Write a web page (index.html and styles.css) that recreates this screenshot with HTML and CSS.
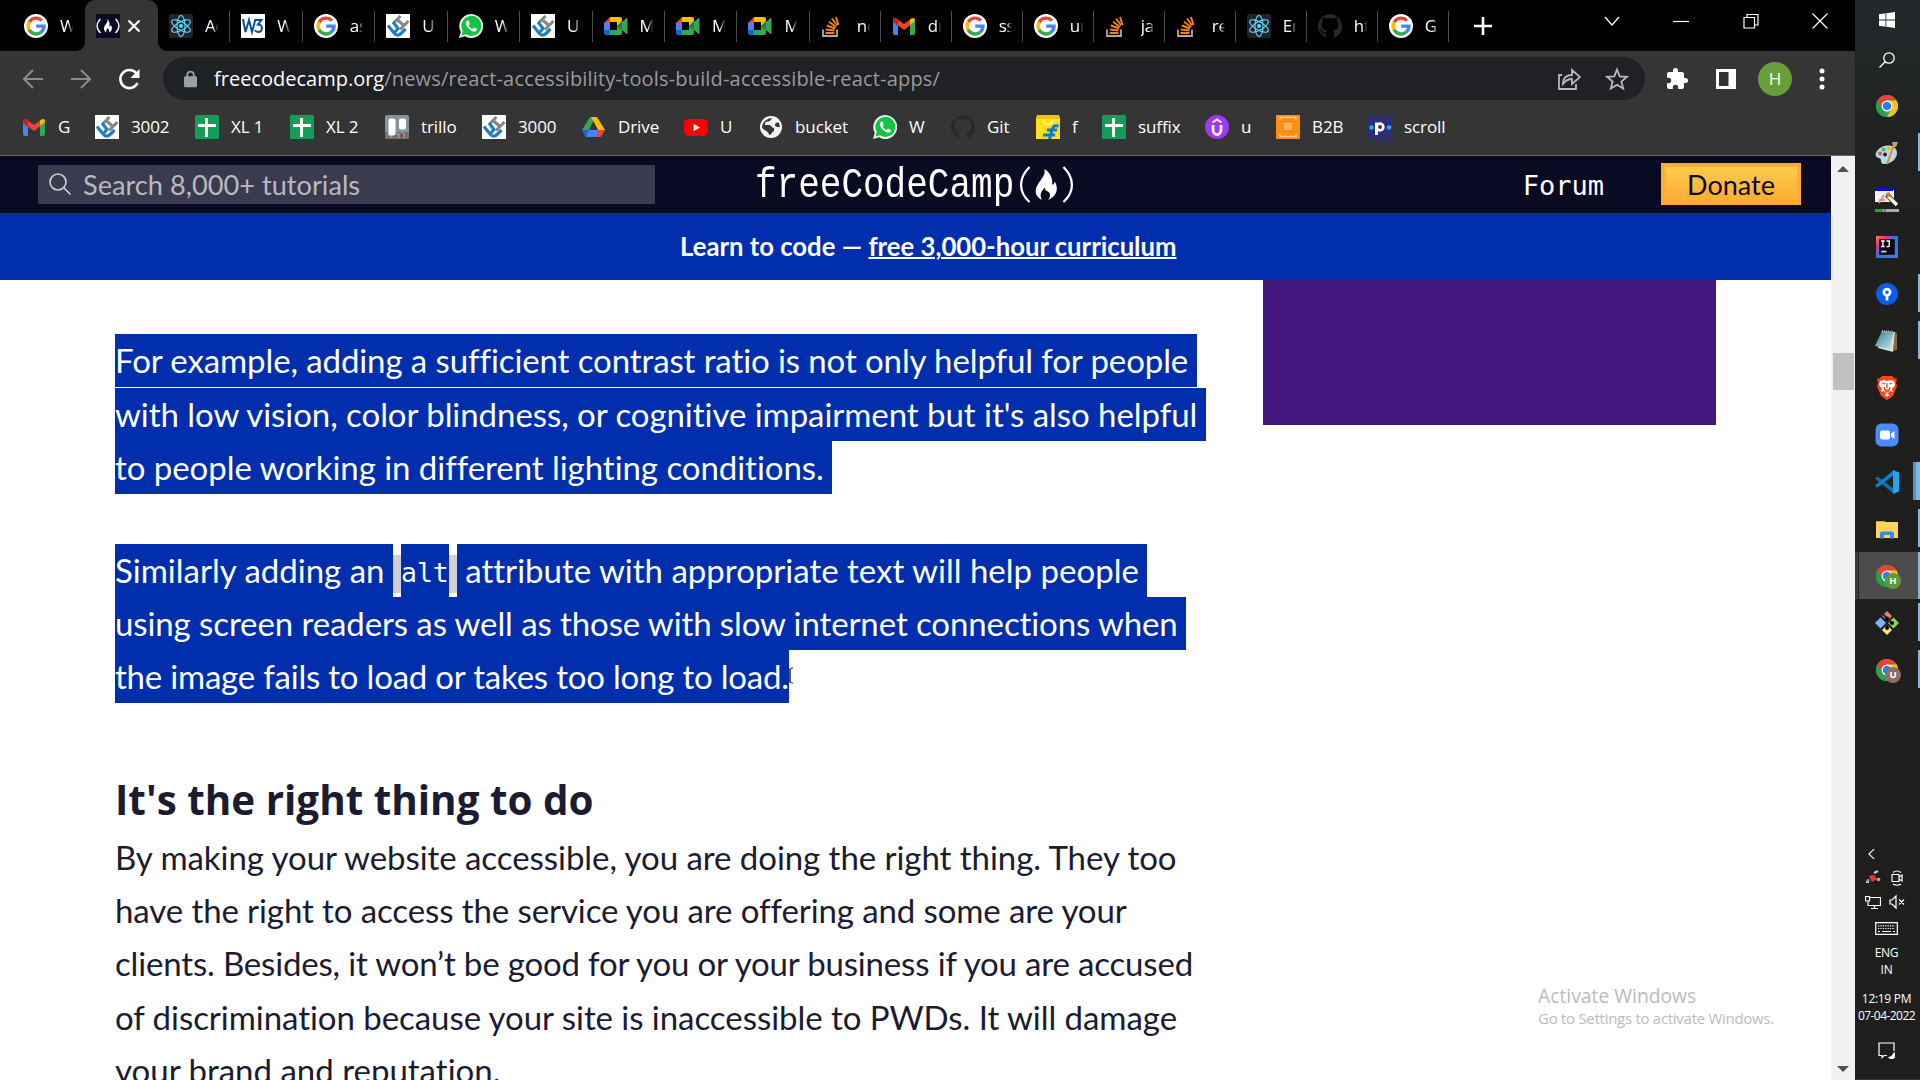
FILE: index.html
```html
<!DOCTYPE html>
<html lang="en">
<head>
<meta charset="utf-8">
<title>React Accessibility Tools</title>
<link rel="stylesheet" href="styles.css">
</head>
<body>
<svg class="sprite" aria-hidden="true">
  <linearGradient id="ij" x1="0" y1="0" x2="1" y2="1"><stop offset="0" stop-color="#ff8a1e"/><stop offset=".25" stop-color="#e8318c"/><stop offset=".5" stop-color="#1d7df2"/><stop offset="1" stop-color="#5a6cf5"/></linearGradient>
  <linearGradient id="np" x1="0" y1="0" x2="1" y2="1"><stop offset="0" stop-color="#2f7f8c"/><stop offset="1" stop-color="#c6e9ee"/></linearGradient>
  <symbol id="google" viewBox="0 0 24 24"><circle cx="12" cy="12" r="12" fill="#fff"/><g fill="none" stroke-width="3.4"><path d="M5.2 8.1A8 8 0 0 1 17.9 6.6" stroke="#ea4335"/><path d="M5.1 15.8a8 8 0 0 1 .1-7.7" stroke="#fbbc05"/><path d="M17.3 18A8 8 0 0 1 5.1 15.8" stroke="#34a853"/><path d="M12.2 12.1h7.8A8 8 0 0 1 17.2 18" stroke="#4285f4"/></g></symbol>
  <symbol id="fcc" viewBox="0 0 24 24"><path d="M0 0h24v24H0z" fill="#0a0a23"/><path d="M4.500 5C0 9 0 15 4.500 19M19.500 5c4.500 4 4.500 10 0 14" fill="none" stroke="#fff" stroke-width="1.400"/><path d="M11.500 5c1 4-4 6-3.500 10 .2 2 1.500 3 2.500 3.500-.8-2 .1-3 1.300-4.500.2 1.200 1.800 1.500 1.400 4.500 3-1.500 3.500-5 1.600-7.500-.2 1-.7 1.500-1.300 1.500.4-3-.3-6-2-7.500z" fill="#fff"/></symbol>
  <symbol id="react" viewBox="0 0 24 24"><rect width="24" height="24" rx="2" fill="#20232a"/><circle cx="12" cy="12" r="2" fill="#61dafb"/><g fill="none" stroke="#61dafb" stroke-width="1.100" transform="rotate(90 12 12)"><ellipse cx="12" cy="12" rx="10.500" ry="4"/><ellipse cx="12" cy="12" rx="10.500" ry="4" transform="rotate(60 12 12)"/><ellipse cx="12" cy="12" rx="10.500" ry="4" transform="rotate(120 12 12)"/></g></symbol>
  <symbol id="w3" viewBox="0 0 24 24"><path d="M0 0h24v24H0z" fill="#fff"/><path d="M2 5l2.500 13L8 6l3 12L14.500 5M14.500 6h6l-3.500 4.500c5.500 0 5 7.500 0 7.500-1.500 0-2.500-.7-3-2" fill="none" stroke="#0d4f93" stroke-width="2"/></symbol>
  <symbol id="uh" viewBox="0 0 24 24"><path d="M0 0h24v24H0z" fill="#fff"/><path d="M8 8.500 14.500 2M14 15.500 22.500 7M11 5.500l7 6" fill="none" stroke="#858585" stroke-width="3"/><path d="M2 11.500l6 7.500q3.500 4 7 .5l4.500-4.500M7 8l5 6.500-3 3.500" fill="none" stroke="#2280b8" stroke-width="3.200"/></symbol>
  <symbol id="whatsapp" viewBox="0 0 24 24"><path d="M0 24l1.800-6A12 12 0 1 1 6 22.300z" fill="#e8f5e9"/><path d="M2.500 21.500 3.800 17A10 10 0 1 1 7 20.300z" fill="#12c344"/><path d="M8.500 6.500c-2 1-2 3.500-.8 5.500 1.700 3 4.300 5.300 7.300 5.500 1.700 0 3-1 3-2.600l-3-1.500-1.400 1.500c-2-.8-3.200-2-4-3.700l1.100-1.300-1.100-3.300z" fill="#fff"/></symbol>
  <symbol id="meet" viewBox="0 0 24 24"><path d="M0 9l6-6v6z" fill="#ea4335"/><path d="M6 3h10q2 0 2 2v4l-5 4V8H6z" fill="#fbbc04"/><path d="M0 9h6v7H0z" fill="#4285f4"/><path d="M0 16h6v5H2q-2 0-2-2z" fill="#1967d2"/><path d="M6 16h7v-4l5 3v4q0 2-2 2H6z" fill="#34a853"/><path d="M13 12l5-5v10z" fill="#188038"/><path d="M18 8l4.500-4q1-.5 1 .7v15q0 1-1 .4L18 16z" fill="#34a853"/></symbol>
  <symbol id="stack" viewBox="0 0 24 24"><path d="M2 15.500V22h14v-6.500" fill="none" stroke="#aaa" stroke-width="1.800"/><path d="M4.500 19h9M4.700 15.500l8.800 1M5.800 11.500l8.200 3M8 7.800l7 5.200M11 4.500l5.200 7M15 3l2.500 8" stroke="#f48024" stroke-width="1.900"/></symbol>
  <symbol id="gmail" viewBox="0 0 24 24"><path d="M1 7v12q0 2 2 2h3V9z" fill="#4285f4"/><path d="M18 9v12h3q2 0 2-2V7z" fill="#34a853"/><path d="M1 8V6q0-2 2-2 1 0 2 .8L12 10v6z" fill="#ea4335"/><path d="M12 16V10l7-5.200v6z" fill="#ea4335"/><path d="M18 11V5.500l1.300-.9Q23 2.500 23 7z" fill="#fbbc04"/><path d="M1 8V6q0-2 2-2 1 0 3 1.500V12z" fill="#c5221f"/></symbol>
  <symbol id="github" viewBox="0 0 24 24"><path d="M8 23.500v-4c-3 .7-4-1-4.700-2.300-.4-.7-1.600-1.200-1.200-1.500 1.200-.5 2.200.8 2.800 1.600.8 1.100 2 1.200 3.200.7.200-.8.6-1.300 1-1.600C5.500 15.800 3.600 14.300 3.600 10.500c0-1.400.5-2.500 1.300-3.400-.3-.9-.4-2.200.2-3.700 1.300 0 2.600.7 3.500 1.400 2.200-.6 4.600-.6 6.800 0 .9-.7 2.200-1.400 3.500-1.400.6 1.500.5 2.800.2 3.700.8.900 1.300 2 1.300 3.400 0 3.800-1.900 5.300-5.500 5.900.8.700 1.100 1.700 1.100 3.100v4C21 22 24 18 24 12A12 12 0 1 0 8 23.500z" fill="#24292f"/></symbol>
  <symbol id="sheet" viewBox="0 0 24 24"><rect width="24" height="24" rx="1.500" fill="#129d58"/><path d="M11.500 3v19M3 10.500h18" stroke="#fff" stroke-width="2.900"/></symbol>
  <symbol id="trello" viewBox="0 0 24 24"><rect width="24" height="24" rx="2" fill="#8395a3"/><path d="M0 17h24v5q0 2-2 2H2q-2 0-2-2z" fill="#77706e"/><path d="M2 20h4v3M11 19h3v4M17 18h2v5" stroke="#aaa" fill="none"/><rect x="3.500" y="3.500" width="7" height="17" rx="2" fill="#fff"/><rect x="14" y="3.500" width="7" height="11" rx="2" fill="#fff"/><path d="M16 19h2v3h-2z" fill="#a32c46"/></symbol>
  <symbol id="drive" viewBox="0 0 24 24"><path d="M8 2h5l-5 11-4 8L0 15z" fill="#34a853"/><path d="M9 2h6l8 13h-7z" fill="#fbbc04"/><path d="M7 15h10l-2 7H3.500z" fill="#4285f4"/><path d="M16 15h7l-4 7h-4z" fill="#ea4335"/><path d="M7 15l-3.500 7L0 15z" fill="#1967d2"/><path d="M12 8l4 7H8z" fill="#353535"/></symbol>
  <symbol id="youtube" viewBox="0 0 24 24"><rect y="4" width="24" height="17" rx="4.500" fill="#f00"/><path d="M9.500 8.700v7.600l6.500-3.800z" fill="#fff"/></symbol>
  <symbol id="globe" viewBox="0 0 24 24"><circle cx="12" cy="12" r="11" fill="#f1f3f4"/><path d="M14 3.500c-3 .5-2 3-5 3-3 0-3 2-3 3.500h4c3 0 2 3 5 3v3c-2 0-2 4-5 4 0-4-5-4-7-7.500A9.500 9.500 0 0 1 14 3.500zM20 8c-2-1-4 0-4 2s3 2 5 2" fill="#353535"/></symbol>
  <symbol id="flipkart" viewBox="0 0 24 24"><path d="M0 2h24v22H0z" fill="#ffe11b"/><path d="M1 0h22l1 4H0z" fill="#f9bf13"/><path d="M7 4c1 7 9 7 10 0" fill="none" stroke="#fff8b0" stroke-width="1.500"/><path d="M22.500 11c-5-1-6 1-7 6l-2 7M11 15h10M7 20h12" fill="none" stroke="#047bd5" stroke-width="3"/></symbol>
  <symbol id="udemy" viewBox="0 0 24 24"><circle cx="12" cy="12" r="12" fill="#a435f0"/><path d="M8 10v5c0 6 8 6 8 0v-5" fill="none" stroke="#fff" stroke-width="2.800"/><path d="M7.500 7.500 12 4.500l4.500 3" fill="none" stroke="#fff" stroke-width="2"/></symbol>
  <symbol id="b2b" viewBox="0 0 24 24"><path d="M0 0h24v24H0z" fill="#ff8d12"/><path d="M4 5V2.500h16V5M4 19v2.500h16V19" fill="none" stroke="#ffd09a" stroke-width="1.300"/><path d="M8 8h8v7H8z" fill="#ffbd75"/><path d="M9 10h6M9 13h6" stroke="#ff8d12" stroke-dasharray="1.500 1"/></symbol>
  <symbol id="pscroll" viewBox="0 0 24 24"><path d="M0 0h24v24H0z" fill="#2b2e76"/><circle cx="3.500" cy="12.500" r="2.300" fill="#10b8f5"/><circle cx="21" cy="12.500" r="2.300" fill="#10b8f5"/><path d="M8.500 7.500v12.500" stroke="#fff" stroke-width="3"/><circle cx="12" cy="12" r="3.300" fill="none" stroke="#fff" stroke-width="2.800"/></symbol>
  <symbol id="chrome" viewBox="0 0 24 24"><circle cx="12" cy="12" r="12" fill="#34a853"/><path d="M1.600 6A12 12 0 0 1 22.400 6H12L7 15z" fill="#ea4335"/><path d="M12 6h10.400A12 12 0 0 1 12 24l5.200-9z" fill="#fbc116"/><path d="M1.600 6 6.800 15 12 24A12 12 0 0 1 1.600 6z" fill="#2b9e49"/><circle cx="12" cy="12" r="6" fill="#fff"/><circle cx="12" cy="12" r="4.700" fill="#2f7de9"/></symbol>
  <symbol id="search" viewBox="0 0 24 24"><circle cx="10" cy="10" r="8" fill="none" stroke="currentColor" stroke-width="1.600"/><path d="m15.500 15.500 7 7" stroke="currentColor" stroke-width="1.600"/></symbol>
</svg>

<div class="desktop">
<div class="browser">
  <header class="tabstrip">
    <div class="tabs">
      <div class="tab wide"><svg class="fav"><use href="#google"/></svg><span class="tab-title">W</span></div>
      <div class="tab wide active"><svg class="fav"><use href="#fcc"/></svg><svg class="tab-x" viewBox="0 0 14 14"><path d="m1.500 1.500 11 11m0-11-11 11"/></svg></div>
      <div class="tab wide sep"><svg class="fav"><use href="#react"/></svg><span class="tab-title">Ac</span></div>
      <div class="tab wide sep"><svg class="fav"><use href="#w3"/></svg><span class="tab-title">W</span></div>
      <div class="tab wide sep"><svg class="fav"><use href="#google"/></svg><span class="tab-title">as</span></div>
      <div class="tab wide sep"><svg class="fav"><use href="#uh"/></svg><span class="tab-title">U</span></div>
      <div class="tab wide sep"><svg class="fav"><use href="#whatsapp"/></svg><span class="tab-title">W</span></div>
      <div class="tab wide sep"><svg class="fav"><use href="#uh"/></svg><span class="tab-title">U</span></div>
      <div class="tab wide sep"><svg class="fav"><use href="#meet"/></svg><span class="tab-title">M</span></div>
      <div class="tab wide sep"><svg class="fav"><use href="#meet"/></svg><span class="tab-title">M</span></div>
      <div class="tab wide sep"><svg class="fav"><use href="#meet"/></svg><span class="tab-title">M</span></div>
      <div class="tab sep"><svg class="fav"><use href="#stack"/></svg><span class="tab-title">no</span></div>
      <div class="tab sep"><svg class="fav"><use href="#gmail"/></svg><span class="tab-title">dr</span></div>
      <div class="tab sep"><svg class="fav"><use href="#google"/></svg><span class="tab-title">ss</span></div>
      <div class="tab sep"><svg class="fav"><use href="#google"/></svg><span class="tab-title">ur</span></div>
      <div class="tab sep"><svg class="fav"><use href="#stack"/></svg><span class="tab-title">ja</span></div>
      <div class="tab sep"><svg class="fav"><use href="#stack"/></svg><span class="tab-title">re</span></div>
      <div class="tab sep"><svg class="fav"><use href="#react"/></svg><span class="tab-title">Er</span></div>
      <div class="tab sep"><svg class="fav"><use href="#github"/></svg><span class="tab-title">ht</span></div>
      <div class="tab sep"><svg class="fav"><use href="#google"/></svg><span class="tab-title">G</span></div>
    </div>
    <svg class="new-tab" viewBox="0 0 18 18"><path d="M9 0v18M0 9h18"/></svg>
    <div class="window-controls">
      <svg viewBox="0 0 16 16"><path d="m1 4 7 8 7-8"/></svg>
      <svg viewBox="0 0 16 16"><path d="M0 8.500h16"/></svg>
      <svg viewBox="0 0 16 16"><path d="M1 4.500h10.500V15H1zM4 4V1.500h11V12h-3"/></svg>
      <svg viewBox="0 0 16 16"><path d="m.5.500 15 15m0-15-15 15"/></svg>
    </div>
  </header>

  <div class="toolbar">
    <div class="nav-row">
      <div class="nav-buttons">
        <svg class="dim" viewBox="0 0 24 24"><path d="M22 12H3m9-9-9 9 9 9"/></svg>
        <svg class="dim" viewBox="0 0 24 24"><path d="M2 12h19m-9-9 9 9-9 9"/></svg>
        <svg viewBox="0 0 24 24"><path d="M20.500 16a9 9 0 1 1-1-9.500" stroke-width="2.600"/><path d="M22.500 2v9h-9z" fill="#fff" stroke="none"/></svg>
      </div>
      <div class="omnibox">
        <svg class="lock" viewBox="0 0 14 18"><rect y="6" width="14" height="12" rx="1.500" fill="#9aa0a6"/><path d="M3.500 7V4.500a3.500 3.500 0 0 1 7 0V7" fill="none" stroke="#9aa0a6" stroke-width="2"/></svg>
        <span class="url"><b>freecodecamp.org</b>/news/react-accessibility-tools-build-accessible-react-apps/</span>
        <svg class="share" viewBox="0 0 24 24"><path d="M5 8H2v14h17v-5M6 17c0-7 4-9 9-9V3l8 7-8 7v-5c-4 0-6 1-9 5z"/></svg>
        <svg class="star" viewBox="0 0 24 24"><path d="m12 2.500 2.700 6.800 7.300.5-5.600 4.700 1.800 7.100L12 17.700l-6.200 3.900 1.800-7.100L2 9.800l7.300-.5z"/></svg>
      </div>
      <div class="actions">
        <svg viewBox="0 0 24 24"><path d="M20.500 11H19V7q0-2-2-2h-4V3.500a2.500 2.500 0 0 0-5 0V5H4Q2 5 2 7v3.800h1.500a2.700 2.700 0 0 1 0 5.400H2V20q0 2 2 2h3.800v-1.500a2.700 2.700 0 0 1 5.400 0V22H17q2 0 2-2v-4h1.500a2.500 2.500 0 0 0 0-5z" fill="#fff"/></svg>
        <svg viewBox="0 0 24 24"><path d="M3.500 3.500h17v17h-17z" fill="none" stroke="#fff" stroke-width="3"/><path d="M14.500 3h6v18h-6z" fill="#fff"/></svg>
        <span class="avatar">H</span>
        <svg viewBox="0 0 24 24" fill="#fff"><circle cx="12" cy="4" r="2.500"/><circle cx="12" cy="12" r="2.500"/><circle cx="12" cy="20" r="2.500"/></svg>
      </div>
    </div>
    <nav class="bookmarks">
      <a><svg class="fav"><use href="#gmail"/></svg>G</a>
      <a><svg class="fav"><use href="#uh"/></svg>3002</a>
      <a><svg class="fav"><use href="#sheet"/></svg>XL 1</a>
      <a><svg class="fav"><use href="#sheet"/></svg>XL 2</a>
      <a><svg class="fav"><use href="#trello"/></svg>trillo</a>
      <a><svg class="fav"><use href="#uh"/></svg>3000</a>
      <a><svg class="fav"><use href="#drive"/></svg>Drive</a>
      <a><svg class="fav"><use href="#youtube"/></svg>U</a>
      <a><svg class="fav"><use href="#globe"/></svg>bucket</a>
      <a><svg class="fav"><use href="#whatsapp"/></svg>W</a>
      <a><svg class="fav"><use href="#github"/></svg>Git</a>
      <a><svg class="fav"><use href="#flipkart"/></svg>f</a>
      <a><svg class="fav"><use href="#sheet"/></svg>suffix</a>
      <a><svg class="fav"><use href="#udemy"/></svg>u</a>
      <a><svg class="fav"><use href="#b2b"/></svg>B2B</a>
      <a><svg class="fav"><use href="#pscroll"/></svg>scroll</a>
    </nav>
  </div>

  <div class="viewport">
    <div class="page">
      <div class="site-nav">
        <div class="search"><svg><use href="#search"/></svg><span>Search 8,000+ tutorials</span></div>
        <div class="logo"><span class="logo-text">freeCodeCamp</span>
          <svg viewBox="0 0 54 36"><path d="M10 1C-1 12-1 25 10 35M43 1c11 11 11 24 0 34" fill="none" stroke="#fff" stroke-width="2.200"/><path d="M24.500 3c2 8-8 13-8.500 21-.2 5 3 7 6 9-2.500-5-.8-8 3-12 0 4 3 3 4.500 5.500 1.300 2.500 0 4.500-1.500 6.500 8-3.500 11-10.500 6.500-18-.3 2-1 3-2.500 3.200C33 12 29.500 6 24.500 3z" fill="#fff"/></svg>
        </div>
        <div class="site-links"><span class="forum">Forum</span><span class="donate">Donate</span></div>
      </div>
      <div class="banner">Learn to code — <u>free 3,000-hour curriculum</u></div>
      <div class="content">
        <article>
          <p class="selected gapped"><span class="line tight-2">For example, adding a sufficient contrast ratio is not only helpful for people </span><span class="line tight-1">with low vision, color blindness, or cognitive impairment but it's also helpful </span><span class="line tight-1">to people working in different lighting conditions. </span></p>
          <p class="selected"><span class="line tight-0">Similarly adding an <code><span>alt</span></code> attribute with appropriate text will help people </span><span class="line tight-2">using screen readers as well as those with slow internet connections when </span><span class="line tight-4">the image fails to load or takes too long to load.<svg class="cursor" viewBox="0 0 8 17"><path d="M1 1q3 0 3 2v11q0 2-3 2M7 1Q4 1 4 3v11q0 2 3 2"/></svg></span></p>
          <h2>It's the right thing to do</h2>
          <p class="plain"><span class="line tight-1">By making your website accessible, you are doing the right thing. They too</span><span class="line tight-2">have the right to access the service you are offering and some are your</span><span class="line tight-3">clients. Besides, it won’t be good for you or your business if you are accused</span><span class="line tight-1">of discrimination because your site is inaccessible to PWDs. It will damage</span><span class="line tight-0">your brand and reputation.</span></p>
        </article>
        <aside class="ad"></aside>
      </div>
    </div>
    <div class="scrollbar">
      <svg viewBox="0 0 12 6"><path d="M0 6l6-6 6 6z"/></svg>
      <span class="thumb"></span>
      <svg class="down" viewBox="0 0 12 6"><path d="M0 0l6 6 6-6z"/></svg>
    </div>
  </div>
</div>

<aside class="taskbar">
  <div class="start">
    <svg viewBox="0 0 16 16" class="win"><path d="M0 2.200 6.500 1.300v6.200H0zM7.300 1.200 16 0v7.500H7.300zM0 8.400h6.500v6.300L0 13.800zM7.300 8.400H16V16l-8.700-1.200z" fill="#fff"/></svg>
    <svg viewBox="0 0 16 16" class="lens"><circle cx="10" cy="6" r="5.200"/><path d="M6.200 9.700.5 15.500"/></svg>
  </div>
  <div class="apps">
    <div class="app"><svg class="small"><use href="#chrome"/></svg></div>
    <div class="app open"><svg viewBox="0 0 24 24"><path d="M2 10C8 2 22 3 22 12c0 5-5 11-13 11-5 0-1-5-5-6-4-1-4-4-2-7z" fill="#b5d9ea"/><circle cx="5" cy="12.500" r="2" fill="#e74c3c"/><circle cx="8.500" cy="8.500" r="2" fill="#5cb85c"/><circle cx="14" cy="7.500" r="2" fill="#f0b429"/><circle cx="10" cy="13.500" r="2" fill="#222"/><path d="M12 23 19 4" stroke="#e08a2e" stroke-width="2"/><path d="m17 1 6 0-2 5h-3z" fill="#c99b6b"/></svg></div>
    <div class="app"><svg viewBox="0 0 24 24"><path d="M0 2h19v12H0z" fill="#f2f2f2"/><path d="M0 0h18v3H0z" fill="#0b0be0"/><path d="M4 15 9 7M4 12l6 0" stroke="#f2888c" stroke-width="2"/><path d="m12 7 10 10" stroke="#222" stroke-width="5"/><path d="m13 8 9 9" stroke="#f4f4ea" stroke-width="3.500"/><path d="m10 6 4-2 3 4-3 1z" fill="#b98518"/><path d="M0 21h24v3H0z" fill="#aaa"/><path d="M0 21h8v3H0z" fill="#1fae1f"/><path d="M9 21h2v3H9z" fill="#66f"/></svg></div>
    <div class="app"><svg class="small" viewBox="0 0 24 24"><path d="M0 0h24v24H0z" fill="url(#ij)"/><path d="M3.500 3.500h17v17h-17z" fill="#12050f"/><path d="M5.500 5.500h4m-2 0v6m-2 0h4M11.500 5.500h3v5q0 1.500-3 1" fill="none" stroke="#fff" stroke-width="1.500"/><path d="M5.500 17h6" stroke="#ccc" stroke-width="2"/></svg></div>
    <div class="app open"><svg class="small" viewBox="0 0 24 24"><circle cx="12" cy="12" r="12" fill="#0a5de8"/><circle cx="12" cy="10" r="3.400" fill="none" stroke="#fff" stroke-width="3"/><path d="M12 13v6" stroke="#fff" stroke-width="3"/></svg></div>
    <div class="app open"><svg viewBox="0 0 24 24"><path d="m20 3 2 1v17l-4 1z" fill="#8c6334"/><path d="m7 2 13 1-2 20L3 19z" fill="#d5dde0"/><path d="m7 2 12 1-5 17-14-3z" fill="url(#np)"/><path d="m7 2 12 1" stroke="#aaa" stroke-width="2" stroke-dasharray="1 1"/></svg></div>
    <div class="app"><svg viewBox="0 0 24 24"><path d="m7 0h10l2 2 3 1-1 4 1 3-4 10-6 4-6-4L2 10l1-3-1-4 3-1z" fill="#fb4515"/><path d="m5 5 4-1 3 1 3-1 4 1 1 4-3 4 1 3-3-1-3 3-3-3-3 1 1-3-3-4z" fill="#fff"/><path d="m7 7 3 1M17 7l-3 1M12 7v5m-3-1 1 3h4l1-3M10 15l2 1 2-1" fill="none" stroke="#fb4515" stroke-width="1.300"/><path d="m9.500 19 2.500-2 2.500 2-2.500 1.800z" fill="#fff"/></svg></div>
    <div class="app"><svg viewBox="0 0 24 24"><rect x=".5" y=".5" width="23" height="23" rx="6" fill="#4a8cff"/><rect x="5" y="7.500" width="10" height="9" rx="2" fill="#fff"/><path d="m16 10.500 3.500-2.500v8L16 13.500z" fill="#fff"/></svg></div>
    <div class="app open double"><svg viewBox="0 0 24 24"><path d="M0 8.500 2.500 6.500 19 19v5z" fill="#0a72bd"/><path d="M0 15.500 2.500 17.500 19 5V0z" fill="#1583cb"/><path d="m18 0 6 2.500v19L18 24z" fill="#27a4ef"/></svg></div>
    <div class="app open"><svg viewBox="0 0 24 24"><path d="M1 4h9l1 2H1z" fill="#e09b11"/><path d="M1 5h22v16H1z" fill="#fdd462"/><path d="M5 21.500v-5q0-2 2-2h10q2 0 2 2v5h-4V18H9v3.500z" fill="#398fd6"/></svg></div>
    <div class="app open current"><svg class="small"><use href="#chrome"/></svg><i class="profile">H</i></div>
    <div class="app open"><svg viewBox="0 0 24 24"><path d="m12 0 5 5-5 5-5-5z" fill="#f37779"/><path d="m5.500 6.500 5.500 5.500-5.500 5.500L0 12z" fill="#7db3ff"/><path d="m18.500 6.500L24 12l-5.500 5.500L13 12z" fill="#8cd35b"/><path d="m12 14 5 5-5 5-5-5z" fill="#ffe377"/><path d="m8 3 4 5v10M12 9l5 3" fill="none" stroke="#222" stroke-width="2"/><circle cx="12" cy="7.500" r="2"/><circle cx="12" cy="17" r="2"/><circle cx="17" cy="12" r="2"/></svg></div>
    <div class="app open"><svg class="small"><use href="#chrome"/></svg><i class="profile brown">U</i></div>
  </div>
  <div class="tray">
    <svg class="tray-chevron" viewBox="0 0 8 12"><path d="M7 .5 1 6l6 5.500"/></svg>
    <div class="tray-icons">
      <svg viewBox="0 0 16 16"><path d="m4 6 5-1 3 4-5 3z" fill="#e23c30" stroke="none"/><path d="m9 3 4-2M1 12h3" stroke="#ccc" stroke-width="2"/><circle cx="3" cy="10.500" r="1.600" fill="#999" stroke="none"/><circle cx="13.500" cy="9.500" r="1.800" fill="#aaa" stroke="none"/></svg>
      <svg viewBox="0 0 16 16"><path d="M3 4.500h7v7H3zM10 7l3-2v6l-3-2M4 2.500q4-3 8 0M4 14q4 2.500 8 0"/></svg>
      <svg viewBox="0 0 16 16"><path d="M4 3.500h11.500v8H3V7M9.500 12v3M6 14.500h7M.5 2.500h4V7h-4z"/></svg>
      <svg viewBox="0 0 16 16"><path d="M1 6h2l4-4v12L3 10H1zM10 5.500l5 5m0-5-5 5"/></svg>
    </div>
    <svg class="keyboard" viewBox="0 0 23 13"><path d="M.7.700h21.600v11.600H.7z"/><path d="M3 3.800h17M3 6.500h17" stroke-dasharray="1.200 1.200"/><path d="M3 9.500h2M7 9.500h9M18 9.500h2"/></svg>
    <div class="lang">ENG<br>IN</div>
    <div class="clock">12:19 PM<br><span>07-04-2022</span></div>
    <svg class="notify" viewBox="0 0 17 17"><path d="M9 13.500H6L4 15.500V13.500H1V1h15v8"/><path d="M16 10a4 4 0 1 1-6 5q4 0 6-5z" fill="#fff" stroke="none"/></svg>
  </div>
</aside>
<div class="watermark"><div>Activate Windows</div><small>Go to Settings to activate Windows.</small></div>
</div>
</body>
</html>
```
FILE: styles.css
```css
* { box-sizing: border-box; }
body { margin: 0; width: 1920px; height: 1080px; overflow: hidden; font-family: "Open Sans", "Noto Sans", sans-serif; }
svg { display: block; flex: none; }
.sprite { position: absolute; width: 0; height: 0; }
.desktop { display: flex; height: 1080px; position: relative; }
.browser { width: 1855px; display: flex; flex-direction: column; }
.fav { width: 24px; height: 24px; }

.tabstrip { height: 51px; background: #000; display: flex; padding-left: 13px; }
.tabs { display: flex; }
.tab { width: 71px; display: flex; align-items: center; padding-left: 11px; position: relative; }
.tab.wide { width: 72.45px; }
.tab.sep::after { content: ""; position: absolute; right: 0; top: 11px; width: 1px; height: 31px; background: #4b4b4b; }
.tab-title { margin: -1px 0 0 12px; width: 14px; overflow: hidden; white-space: nowrap; color: #fff; font-size: 17px; letter-spacing: -.3px; -webkit-mask-image: linear-gradient(90deg, #000 55%, transparent 95%); mask-image: linear-gradient(90deg, #000 55%, transparent 95%); }
.tab.active { background: #353535; border-radius: 10px 10px 0 0; }
.tab.active::before, .tab.active::after { content: ""; position: absolute; bottom: 0; width: 10px; height: 10px; }
.tab.active::before { left: -10px; background: radial-gradient(circle at 0 0, transparent 10px, #353535 10.5px); }
.tab.active::after { right: -10px; background: radial-gradient(circle at 100% 0, transparent 10px, #353535 10.5px); }
.tab-x { width: 14px; height: 14px; margin-left: 7px; fill: none; stroke: #fff; stroke-width: 2.2; }
.new-tab { width: 18px; height: 18px; margin: 17px 0 0 25px; stroke: #fff; stroke-width: 2.6; }
.window-controls { display: flex; gap: 53.3px; margin: 13px 27px 0 auto; }
.window-controls svg { width: 16px; height: 16px; fill: none; stroke: #fff; stroke-width: 1.2; }

.toolbar { height: 105px; background: #353535; border-bottom: 1px solid #666; padding-top: 6px; }
.nav-row { display: flex; height: 43px; align-items: center; padding-left: 21px; }
.nav-buttons { display: flex; gap: 24px; width: 142px; }
.nav-buttons svg { width: 24px; height: 24px; fill: none; stroke: #fff; stroke-width: 2; }
.nav-buttons .dim { stroke: #8b8b8b; }
.omnibox { width: 1482px; height: 43px; border-radius: 22px; background: #202124; display: flex; align-items: center; padding: 0 16px 0 21px; }
.lock { width: 13px; height: 18px; }
.url { margin: -1px 0 0 17px; font-size: 20px; letter-spacing: .17px; color: #9a9a9a; white-space: nowrap; }
.url b { font-weight: 400; color: #fff; letter-spacing: 0; }
.share, .star { width: 24px; height: 24px; fill: none; stroke: #b8b8b8; stroke-width: 1.8; }
.share { margin-left: auto; }
.star { margin-left: 24px; }
.actions { display: flex; align-items: center; margin-left: 20px; }
.actions svg { width: 24px; height: 24px; }
.actions > * + * { margin-left: 25px; }
.avatar { width: 34px; height: 34px; border-radius: 50%; background: #689f38; color: #fff; font-size: 17px; line-height: 34px; text-align: center; }
.actions .avatar { margin-left: 20px; }
.actions .avatar + svg { margin-left: 18px; }
.bookmarks { display: grid; height: 54px; align-items: center; margin-left: 22px; grid-template-columns: 73px 100px 95px 95px 97px 100px 102px 75px 114px 78px 85px 66px 103px 71px 92px 130px; color: #fff; font-size: 17px; letter-spacing: -.1px; padding-bottom: 1px; }
.bookmarks a { display: flex; gap: 12px; align-items: center; white-space: nowrap; line-height: 22px; }

.viewport { height: 924px; display: flex; }
.page { width: 1831px; background: #fff; overflow: hidden; font-family: Lato, sans-serif; }
.site-nav { height: 57px; background: #0a0a23; display: flex; align-items: center; padding: 0 30px 1px 38px; }
.search { width: 617px; height: 39px; background: #3b3b4f; display: flex; align-items: center; padding-left: 10px; color: #b9b9c0; font-size: 27.2px; }
.search svg { width: 24px; height: 24px; margin-right: 11px; color: #d0d0d5; }
.logo { display: flex; align-items: center; margin-left: 100px; color: #fff; }
.logo-text { font: 36px/36px "Liberation Mono", monospace; transform: scaleY(1.16); padding-top: 3px; }
.logo svg { width: 56px; height: 37px; margin-left: 5px; }
.site-links { margin-left: auto; display: flex; align-items: center; }
.forum { font: 27px "DejaVu Sans Mono", monospace; color: #fff; margin: 2px 57px 0 0; }
.donate { width: 140px; height: 42px; border: 4px solid #ffac33; background: linear-gradient(#fecc4c, #ffac33); color: #0a0a23; font-size: 27px; line-height: 35px; text-align: center; }
.banner { height: 67px; background: #002ead; color: #fff; font-weight: 700; font-size: 25.7px; line-height: 66px; padding-left: 680px; white-space: nowrap; }
.banner u { text-decoration-thickness: 2px; }
.content { display: flex; padding-left: 115px; }
article { width: 1148px; padding-top: 54px; font-size: 33px; line-height: 53.2px; color: #0a0a23; }
.ad { width: 453px; height: 145px; background: #42187f; }
p { margin: 0; }
.line { display: block; width: max-content; white-space: pre; height: 53.2px; }
.tight-0 { font-variant-ligatures: none; }
.tight-1 { letter-spacing: -.05px; }
.tight-2 { letter-spacing: -.1px; }
.tight-3 { letter-spacing: -.17px; }
.tight-4 { letter-spacing: -.21px; }
.selected { color: #fff; margin-bottom: 50px; }
.selected .line { background: #002ead; position: relative; height: 53px; }
.gapped .line:first-child { height: 54px; background: linear-gradient(#002ead 53px, #fff 53px); }
code { display: inline-block; vertical-align: top; height: 53px; padding: 0 8px; background: linear-gradient(#fff 11px, #d0d0d5 11px, #d0d0d5 49px, #fff 49px); font: 26.5px/58px "DejaVu Sans Mono", monospace; }
code span { display: block; height: 53px; background: #002ead; }
.cursor { position: absolute; right: -5px; top: 17px; width: 8px; height: 17px; fill: none; stroke: #222; stroke-width: 1; }
h2 { margin: 0; padding-top: 20px; font: 700 40.4px/54px "Open Sans", "Noto Sans", sans-serif; color: #1b1b32; }
.plain { color: #1b1b32; padding-top: 4px; }

.scrollbar { width: 24px; background: #f1f1f1; display: flex; flex-direction: column; align-items: center; padding: 10px 0 8px; }
.scrollbar svg { width: 12px; height: 6px; fill: #505050; }
.thumb { width: 21px; height: 37px; margin-top: 181px; background: #c1c1c1; }
.scrollbar .down { margin-top: auto; }

.taskbar { width: 65px; background: linear-gradient(#24282a, #1f1f1e 20%, #1e1e1d); display: flex; flex-direction: column; border-bottom: 1px solid #333; }
.start { height: 82px; display: flex; flex-direction: column; align-items: center; padding: 12px 2px 0 0; gap: 24px; }
.start svg { width: 16px; height: 16px; }
.lens { fill: none; stroke: #fff; stroke-width: 1.3; }
.app { height: 47px; display: flex; align-items: center; justify-content: center; position: relative; padding-right: 2px; }
.app svg { width: 24px; height: 24px; }
.app svg.small { width: 22px; height: 22px; }
.open::after { content: ""; position: absolute; right: 0; top: 4px; width: 2px; height: 38px; background: #76b9ed; }
.double::after { width: 4px; border-left: 3px solid #5f8fb5; }
.current { background: linear-gradient(90deg, #3c3c3c 3px, #222 3px, #222 4px, #4c4c4c 4px); }
.current::after { top: 0; height: 47px; }
.profile { position: absolute; left: 30px; top: 21px; width: 16px; height: 16px; border-radius: 50%; background: #5f9a34; color: #fff; font: 700 9.5px/16px "Open Sans", sans-serif; text-align: center; }
.brown { background: #8d6e63; }
.tray { margin-top: auto; display: flex; flex-direction: column; align-items: center; height: 231px; padding: 0 2px 20px 0; color: #fff; }
.tray svg { fill: none; stroke: #fff; stroke-width: 1.2; }
.tray-chevron { width: 7px; height: 12px; margin-right: 30px; }
.tray-icons { display: grid; grid-template-columns: 16px 16px; gap: 8px; margin: 10px 0 12px -6px; padding-left: 2px; }
.tray-icons svg { width: 16px; height: 16px; }
.keyboard { width: 23px; height: 13px; }
.lang, .clock { font-size: 12px; line-height: 17px; text-align: center; letter-spacing: -.3px; }
.lang { margin-top: 9px; }
.clock { margin-top: 12px; white-space: nowrap; }
.clock span { letter-spacing: -.55px; }
.notify { width: 17px; height: 17px; margin-top: auto; }
.watermark { position: absolute; left: 1538px; top: 983px; color: #bbb; font-size: 19.3px; line-height: 26px; white-space: nowrap; }
.watermark small { display: block; font-size: 15px; line-height: 19px; letter-spacing: -.28px; }
```
